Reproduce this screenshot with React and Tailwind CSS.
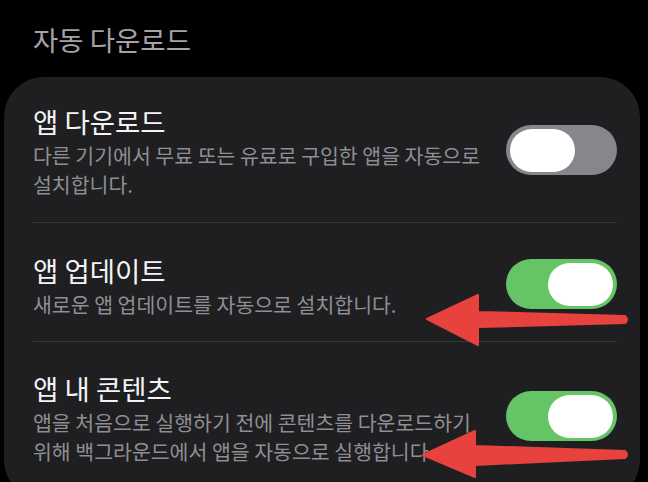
import React, { useState } from 'react';

const rows = [
    {
        title: '앱 다운로드',
        desc: '다른 기기에서 무료 또는 유료로 구입한 앱을 자동으로 설치합니다.',
        on: false,
        pad: 'pt-[27px] pb-[23px]',
        knobTop: 'mt-[21px]',
    },
    {
        title: '앱 업데이트',
        desc: '새로운 앱 업데이트를 자동으로 설치합니다.',
        on: true,
        pad: 'pt-[30px] pb-[22px]',
        knobTop: 'mt-[6px]',
    },
    {
        title: '앱 내 콘텐츠',
        desc: '앱을 처음으로 실행하기 전에 콘텐츠를 다운로드하기 위해 백그라운드에서 앱을 자동으로 실행합니다',
        on: true,
        pad: 'pt-[29px] pb-[24px]',
        knobTop: 'mt-[20px]',
    },
];

function Toggle({ on, onClick, className }) {
    return (
        <button
            onClick={onClick}
            className={`flex h-[50px] w-[111px] shrink-0 items-center rounded-full px-[4px] ${on ? 'justify-end bg-[#65c466]' : 'justify-start bg-[#87868c]'} ${className}`}
        >
            <span className="h-[43px] w-[65px] rounded-full bg-white" />
        </button>
    );
}

export default function App() {
    const [states, setStates] = useState(rows.map((r) => r.on));

    const flip = (i) => {
        setStates((prev) => prev.map((v, j) => (j === i ? !v : v)));
    };

    return (
        <div
            className="relative h-[482px] w-[648px] overflow-hidden bg-black"
            style={{ fontFamily: '"Noto Sans CJK KR", "Noto Sans", sans-serif' }}
        >
            <h2 className="pl-[33px] pt-[22px] text-[27.5px] font-normal leading-[34px] text-[#a3a3a8]">자동 다운로드</h2>

            <div className="ml-[4px] mr-[8px] mt-[21px] rounded-[40px] bg-[#1f1f21] pb-[10px] pl-[29px] pr-[23px]">
                {rows.map((row, i) => (
                    <div
                        key={row.title}
                        className={`flex items-start justify-between ${row.pad} ${i < rows.length - 1 ? 'border-b border-[#38383b]' : ''}`}
                    >
                        <div className="max-w-[468px] break-keep">
                            <p className="text-[27.5px] leading-[34px] text-[#f4f4f6]">{row.title}</p>
                            <p className="mt-[3px] text-[20.5px] leading-[29px] text-[#8e8e93]">{row.desc}</p>
                        </div>
                        <Toggle on={states[i]} onClick={() => flip(i)} className={row.knobTop} />
                    </div>
                ))}
            </div>

            {/* red annotation arrows */}
            <svg className="pointer-events-none absolute left-0 top-0" width="648" height="482" viewBox="0 0 648 482">
                <path
                    d="M427 319 L478 295 L478 312 L625 316 Q629 320 625 323 L478 327 L478 345 Z"
                    fill="#e8423f"
                    stroke="#e8423f"
                    strokeWidth="2"
                    strokeLinejoin="round"
                />
                <path
                    d="M423 455 L475 431 L475 446 L625 451 Q629 455 625 458 L475 465 L475 477 Z"
                    fill="#e8423f"
                    stroke="#e8423f"
                    strokeWidth="2"
                    strokeLinejoin="round"
                />
            </svg>
        </div>
    );
}
